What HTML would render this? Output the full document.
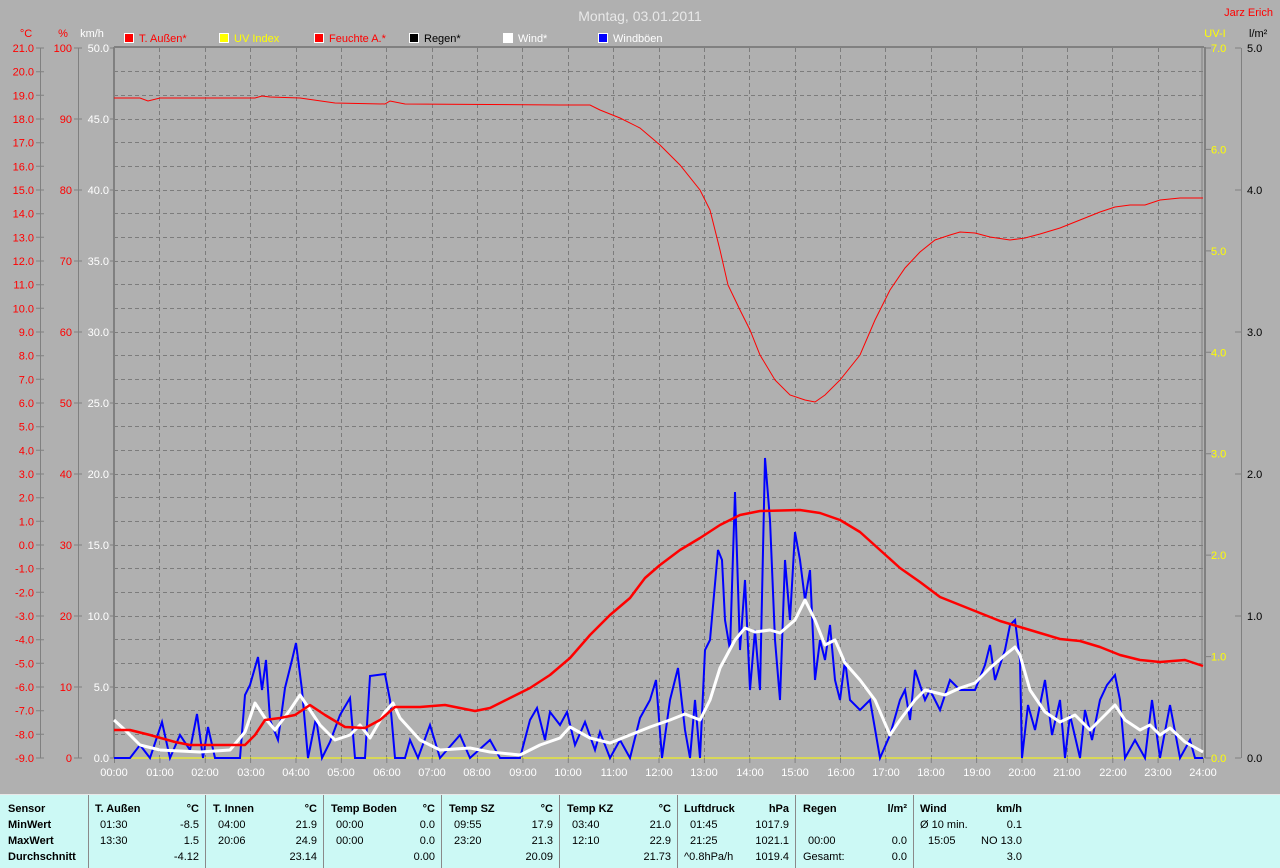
<!DOCTYPE html>
<html><head><meta charset="utf-8"><style>
html,body{margin:0;padding:0;background:#b0b0b0;width:1280px;height:867px;overflow:hidden}
svg{display:block;font-family:"Liberation Sans",sans-serif}
.tbl{position:absolute;left:0;top:794px;width:1280px;height:73px;background:#ccf9f5;border-top:1px solid #e8e8e8;font-family:"Liberation Sans",sans-serif;font-size:11px;color:#000}
.c{position:absolute;top:0;height:73px;border-left:1px solid #8a8a8a}
.r{position:absolute;white-space:nowrap}
.b{font-weight:bold}
</style></head><body>
<svg width="1280" height="794" viewBox="0 0 1280 794">
<g stroke="#7c7c7c" stroke-dasharray="4,3" fill="none">
<path d="M114 71.5H1203M114 95.5H1203M114 119.5H1203M114 142.5H1203M114 166.5H1203M114 190.5H1203M114 213.5H1203M114 237.5H1203M114 261.5H1203M114 284.5H1203M114 308.5H1203M114 332.5H1203M114 355.5H1203M114 379.5H1203M114 403.5H1203M114 426.5H1203M114 450.5H1203M114 474.5H1203M114 497.5H1203M114 521.5H1203M114 545.5H1203M114 568.5H1203M114 592.5H1203M114 616.5H1203M114 639.5H1203M114 663.5H1203M114 687.5H1203M114 710.5H1203M114 734.5H1203"/>
<path d="M159.5 48V758M205.5 48V758M250.5 48V758M296.5 48V758M341.5 48V758M386.5 48V758M432.5 48V758M477.5 48V758M522.5 48V758M568.5 48V758M613.5 48V758M659.5 48V758M704.5 48V758M749.5 48V758M795.5 48V758M840.5 48V758M885.5 48V758M931.5 48V758M976.5 48V758M1022.5 48V758M1067.5 48V758M1112.5 48V758M1158.5 48V758"/>
</g>
<line x1="114" y1="47" x2="1204" y2="47" stroke="#808080" stroke-width="2"/>
<line x1="114" y1="47" x2="114" y2="758" stroke="#808080" stroke-width="2"/>
<line x1="1202" y1="47" x2="1202" y2="758" stroke="#808080" stroke-width="1"/>
<line x1="1205" y1="47" x2="1205" y2="758" stroke="#808080" stroke-width="2"/>
<line x1="114" y1="758" x2="1203" y2="758" stroke="#ffff00" stroke-width="1"/>
<line x1="40.5" y1="48" x2="40.5" y2="758" stroke="#808080"/>
<line x1="78.5" y1="48" x2="78.5" y2="758" stroke="#808080"/>
<line x1="1241.5" y1="48" x2="1241.5" y2="758" stroke="#808080"/>
<g stroke="#808080">
<path d="M36 48h8M36 71.7h8M36 95.3h8M36 119h8M36 142.7h8M36 166.3h8M36 190h8M36 213.7h8M36 237.3h8M36 261h8M36 284.7h8M36 308.3h8M36 332h8M36 355.7h8M36 379.3h8M36 403h8M36 426.7h8M36 450.3h8M36 474h8M36 497.7h8M36 521.3h8M36 545h8M36 568.7h8M36 592.3h8M36 616h8M36 639.7h8M36 663.3h8M36 687h8M36 710.7h8M36 734.3h8M36 758h8"/>
<path d="M74 48h8M74 119h8M74 190h8M74 261h8M74 332h8M74 403h8M74 474h8M74 545h8M74 616h8M74 687h8M74 758h8"/>
<path d="M110 48h4M110 119h4M110 190h4M110 261h4M110 332h4M110 403h4M110 474h4M110 545h4M110 616h4M110 687h4M110 758h4"/>
<path d="M1205 48h6M1205 149.4h6M1205 250.9h6M1205 352.3h6M1205 453.7h6M1205 555.1h6M1205 656.6h6M1205 758h6"/>
<path d="M1235 48h6M1235 190h6M1235 332h6M1235 474h6M1235 616h6M1235 758h6"/>
<path d="M114.5 758v5M159.9 758v5M205.3 758v5M250.6 758v5M296 758v5M341.4 758v5M386.8 758v5M432.1 758v5M477.5 758v5M522.9 758v5M568.3 758v5M613.6 758v5M659 758v5M704.4 758v5M749.8 758v5M795.1 758v5M840.5 758v5M885.9 758v5M931.3 758v5M976.6 758v5M1022 758v5M1067.4 758v5M1112.8 758v5M1158.1 758v5M1203.5 758v5"/>
</g>
<text x="640" y="21" font-size="14" fill="#e8e8e8" text-anchor="middle">Montag, 03.01.2011</text>
<text x="1273" y="16" font-size="11" fill="#ff0000" text-anchor="end">Jarz Erich</text>
<g font-size="11">
<text x="26" y="37" fill="#ff0000" text-anchor="middle">°C</text>
<text x="63" y="37" fill="#ff0000" text-anchor="middle">%</text>
<text x="92" y="37" fill="#ffffff" text-anchor="middle">km/h</text>
<text x="1215" y="37" fill="#ffff00" text-anchor="middle">UV-I</text>
<text x="1249" y="37" fill="#000">l/m²</text>
</g>
<g font-size="11">
<rect x="124.5" y="33.5" width="9" height="9" fill="#ff0000" stroke="#fff"/><text x="139" y="42" fill="#ff0000">T. Außen*</text>
<rect x="219.5" y="33.5" width="9" height="9" fill="#ffff00" stroke="#fff"/><text x="234" y="42" fill="#ffff00">UV Index</text>
<rect x="314.5" y="33.5" width="9" height="9" fill="#ff0000" stroke="#fff"/><text x="329" y="42" fill="#ff0000">Feuchte A.*</text>
<rect x="409.5" y="33.5" width="9" height="9" fill="#000" stroke="#fff"/><text x="424" y="42" fill="#000">Regen*</text>
<rect x="503.5" y="33.5" width="9" height="9" fill="#fff" stroke="#fff"/><text x="518" y="42" fill="#fff">Wind*</text>
<rect x="598.5" y="33.5" width="9" height="9" fill="#0000ff" stroke="#fff"/><text x="613" y="42" fill="#fff">Windböen</text>
</g>
<g font-size="11" fill="#ff0000" text-anchor="end">
<text x="34" y="52">21.0</text><text x="34" y="75.7">20.0</text><text x="34" y="99.3">19.0</text><text x="34" y="123">18.0</text><text x="34" y="146.7">17.0</text><text x="34" y="170.3">16.0</text><text x="34" y="194">15.0</text><text x="34" y="217.7">14.0</text><text x="34" y="241.3">13.0</text><text x="34" y="265">12.0</text><text x="34" y="288.7">11.0</text><text x="34" y="312.3">10.0</text><text x="34" y="336">9.0</text><text x="34" y="359.7">8.0</text><text x="34" y="383.3">7.0</text><text x="34" y="407">6.0</text><text x="34" y="430.7">5.0</text><text x="34" y="454.3">4.0</text><text x="34" y="478">3.0</text><text x="34" y="501.7">2.0</text><text x="34" y="525.3">1.0</text><text x="34" y="549">0.0</text><text x="34" y="572.7">-1.0</text><text x="34" y="596.3">-2.0</text><text x="34" y="620">-3.0</text><text x="34" y="643.7">-4.0</text><text x="34" y="667.3">-5.0</text><text x="34" y="691">-6.0</text><text x="34" y="714.7">-7.0</text><text x="34" y="738.3">-8.0</text><text x="34" y="762">-9.0</text>
<text x="72" y="52">100</text><text x="72" y="123">90</text><text x="72" y="194">80</text><text x="72" y="265">70</text><text x="72" y="336">60</text><text x="72" y="407">50</text><text x="72" y="478">40</text><text x="72" y="549">30</text><text x="72" y="620">20</text><text x="72" y="691">10</text><text x="72" y="762">0</text>
</g>
<g font-size="11" fill="#fff" text-anchor="end">
<text x="109" y="52">50.0</text><text x="109" y="123">45.0</text><text x="109" y="194">40.0</text><text x="109" y="265">35.0</text><text x="109" y="336">30.0</text><text x="109" y="407">25.0</text><text x="109" y="478">20.0</text><text x="109" y="549">15.0</text><text x="109" y="620">10.0</text><text x="109" y="691">5.0</text><text x="109" y="762">0.0</text>
</g>
<g font-size="11" fill="#ffff00">
<text x="1211" y="52">7.0</text><text x="1211" y="153.4">6.0</text><text x="1211" y="254.9">5.0</text><text x="1211" y="356.3">4.0</text><text x="1211" y="457.7">3.0</text><text x="1211" y="559.1">2.0</text><text x="1211" y="660.6">1.0</text><text x="1211" y="762">0.0</text>
</g>
<g font-size="11" fill="#000">
<text x="1247" y="52">5.0</text><text x="1247" y="194">4.0</text><text x="1247" y="336">3.0</text><text x="1247" y="478">2.0</text><text x="1247" y="620">1.0</text><text x="1247" y="762">0.0</text>
</g>
<g font-size="11" fill="#fff" text-anchor="middle">
<text x="114" y="776">00:00</text><text x="160" y="776">01:00</text><text x="205" y="776">02:00</text><text x="251" y="776">03:00</text><text x="296" y="776">04:00</text><text x="341" y="776">05:00</text><text x="387" y="776">06:00</text><text x="432" y="776">07:00</text><text x="477" y="776">08:00</text><text x="523" y="776">09:00</text><text x="568" y="776">10:00</text><text x="614" y="776">11:00</text><text x="659" y="776">12:00</text><text x="704" y="776">13:00</text><text x="750" y="776">14:00</text><text x="795" y="776">15:00</text><text x="841" y="776">16:00</text><text x="886" y="776">17:00</text><text x="931" y="776">18:00</text><text x="977" y="776">19:00</text><text x="1022" y="776">20:00</text><text x="1067" y="776">21:00</text><text x="1113" y="776">22:00</text><text x="1158" y="776">23:00</text><text x="1203" y="776">24:00</text>
</g>
<polyline fill="none" stroke="#ff0000" stroke-width="1" points="114,98 140,98 148,101 160,98 200,98 255,98 262,96 270,97 300,98 335,103 385,104 390,101 405,104 560,105 590,105 600,110 620,118 640,128 660,145 680,165 700,190 710,210 720,250 728,285 740,310 750,330 760,355 775,380 790,395 805,400 815,402 825,395 840,380 860,355 875,320 890,290 905,268 920,252 935,240 950,235 960,232 975,233 990,237 1010,240 1025,238 1040,234 1060,228 1080,220 1100,212 1115,207 1130,205 1145,205 1160,200 1180,198 1203,198"/>
<polyline fill="none" stroke="#0000ff" stroke-width="2" points="114,758 130,758 140,745 150,758 162,722 170,758 180,735 190,750 197,714 203,758 208,727 215,758 240,758 245,695 250,685 258,657 262,690 266,660 270,720 278,740 285,688 292,660 296,643 302,690 308,758 316,718 322,758 330,742 340,715 350,698 355,758 365,758 370,676 385,674 390,700 395,758 405,758 410,740 418,758 430,725 440,758 460,735 470,758 490,740 500,758 520,758 530,720 537,708 545,740 550,712 560,725 567,712 575,745 585,722 595,750 600,732 610,758 620,740 630,758 640,718 650,700 656,680 662,758 670,700 678,668 685,730 690,758 695,700 700,758 705,650 710,640 718,550 722,560 725,620 730,650 735,492 740,650 745,580 750,690 755,630 760,690 765,458 770,520 775,640 780,700 785,560 790,620 795,532 800,560 805,600 810,570 815,680 820,640 825,660 830,625 835,680 840,700 845,660 850,700 860,710 870,700 880,758 890,735 900,700 905,690 910,720 915,670 925,700 930,690 940,710 950,680 960,690 975,690 985,665 990,645 995,680 1005,650 1010,625 1015,620 1020,660 1022,758 1028,705 1035,730 1045,680 1052,735 1060,700 1065,758 1070,715 1080,758 1085,710 1092,740 1100,700 1107,685 1115,675 1120,700 1125,758 1135,740 1145,758 1152,700 1160,758 1170,705 1180,758 1190,740 1195,758 1203,758"/>
<polyline fill="none" stroke="#ffffff" stroke-width="3" stroke-linejoin="round" points="114,720 125,730 140,745 160,750 200,752 230,750 245,732 255,703 265,718 275,730 290,710 300,695 310,710 320,725 335,740 350,735 360,725 370,738 385,712 393,703 400,718 420,740 440,750 470,748 490,752 520,755 540,745 560,738 570,727 590,738 610,743 630,735 650,727 670,720 685,714 700,720 710,700 720,668 735,640 745,628 755,632 770,630 780,633 795,620 805,600 815,620 825,645 835,640 845,663 860,680 875,700 890,735 900,720 915,700 925,690 945,695 960,688 975,683 990,668 1005,655 1015,647 1020,655 1030,690 1045,712 1060,722 1075,715 1090,730 1105,715 1115,705 1125,720 1140,730 1150,725 1160,735 1170,728 1185,742 1203,752"/>
<polyline fill="none" stroke="#ff0000" stroke-width="2.5" stroke-linejoin="round" points="114,730 130,730 150,735 175,742 190,745 245,745 255,735 265,720 280,718 295,715 310,705 325,715 345,727 365,728 380,720 395,707 420,707 445,705 460,708 475,711 490,708 510,698 530,688 550,675 570,658 590,635 610,615 630,598 645,578 660,565 680,550 700,538 720,525 740,515 760,511 800,510 820,513 840,520 860,532 880,550 900,568 920,582 940,597 960,605 980,613 1000,621 1020,627 1040,633 1060,639 1080,641 1100,647 1120,655 1140,660 1160,662 1185,660 1203,666"/>
</svg>
<div class="tbl">
<div class="c" style="left:88px"></div><div class="c" style="left:205px"></div><div class="c" style="left:323px"></div><div class="c" style="left:441px"></div><div class="c" style="left:559px"></div><div class="c" style="left:677px"></div><div class="c" style="left:795px"></div><div class="c" style="left:913px"></div>
<div class="r b" style="left:8px;top:8px">Sensor</div><div class="r b" style="left:8px;top:24px">MinWert</div><div class="r b" style="left:8px;top:40px">MaxWert</div><div class="r b" style="left:8px;top:56px">Durchschnitt</div>

<div class="r b" style="left:95px;top:8px">T. Außen</div><div class="r b" style="right:1081px;top:8px">°C</div>
<div class="r" style="left:100px;top:24px">01:30</div><div class="r" style="right:1081px;top:24px">-8.5</div>
<div class="r" style="left:100px;top:40px">13:30</div><div class="r" style="right:1081px;top:40px">1.5</div>
<div class="r" style="right:1081px;top:56px">-4.12</div>

<div class="r b" style="left:213px;top:8px">T. Innen</div><div class="r b" style="right:963px;top:8px">°C</div>
<div class="r" style="left:218px;top:24px">04:00</div><div class="r" style="right:963px;top:24px">21.9</div>
<div class="r" style="left:218px;top:40px">20:06</div><div class="r" style="right:963px;top:40px">24.9</div>
<div class="r" style="right:963px;top:56px">23.14</div>

<div class="r b" style="left:331px;top:8px">Temp Boden</div><div class="r b" style="right:845px;top:8px">°C</div>
<div class="r" style="left:336px;top:24px">00:00</div><div class="r" style="right:845px;top:24px">0.0</div>
<div class="r" style="left:336px;top:40px">00:00</div><div class="r" style="right:845px;top:40px">0.0</div>
<div class="r" style="right:845px;top:56px">0.00</div>

<div class="r b" style="left:449px;top:8px">Temp SZ</div><div class="r b" style="right:727px;top:8px">°C</div>
<div class="r" style="left:454px;top:24px">09:55</div><div class="r" style="right:727px;top:24px">17.9</div>
<div class="r" style="left:454px;top:40px">23:20</div><div class="r" style="right:727px;top:40px">21.3</div>
<div class="r" style="right:727px;top:56px">20.09</div>

<div class="r b" style="left:567px;top:8px">Temp KZ</div><div class="r b" style="right:609px;top:8px">°C</div>
<div class="r" style="left:572px;top:24px">03:40</div><div class="r" style="right:609px;top:24px">21.0</div>
<div class="r" style="left:572px;top:40px">12:10</div><div class="r" style="right:609px;top:40px">22.9</div>
<div class="r" style="right:609px;top:56px">21.73</div>

<div class="r b" style="left:684px;top:8px">Luftdruck</div><div class="r b" style="right:491px;top:8px">hPa</div>
<div class="r" style="left:690px;top:24px">01:45</div><div class="r" style="right:491px;top:24px">1017.9</div>
<div class="r" style="left:690px;top:40px">21:25</div><div class="r" style="right:491px;top:40px">1021.1</div>
<div class="r" style="left:684px;top:56px">^0.8hPa/h</div><div class="r" style="right:491px;top:56px">1019.4</div>

<div class="r b" style="left:803px;top:8px">Regen</div><div class="r b" style="right:373px;top:8px">l/m²</div>
<div class="r" style="left:808px;top:40px">00:00</div><div class="r" style="right:373px;top:40px">0.0</div>
<div class="r" style="left:803px;top:56px">Gesamt:</div><div class="r" style="right:373px;top:56px">0.0</div>

<div class="r b" style="left:920px;top:8px">Wind</div><div class="r b" style="right:258px;top:8px">km/h</div>
<div class="r" style="left:920px;top:24px">Ø 10 min.</div><div class="r" style="right:258px;top:24px">0.1</div>
<div class="r" style="left:928px;top:40px">15:05</div><div class="r" style="right:258px;top:40px">NO 13.0</div>
<div class="r" style="right:258px;top:56px">3.0</div>
</div>
</body></html>
